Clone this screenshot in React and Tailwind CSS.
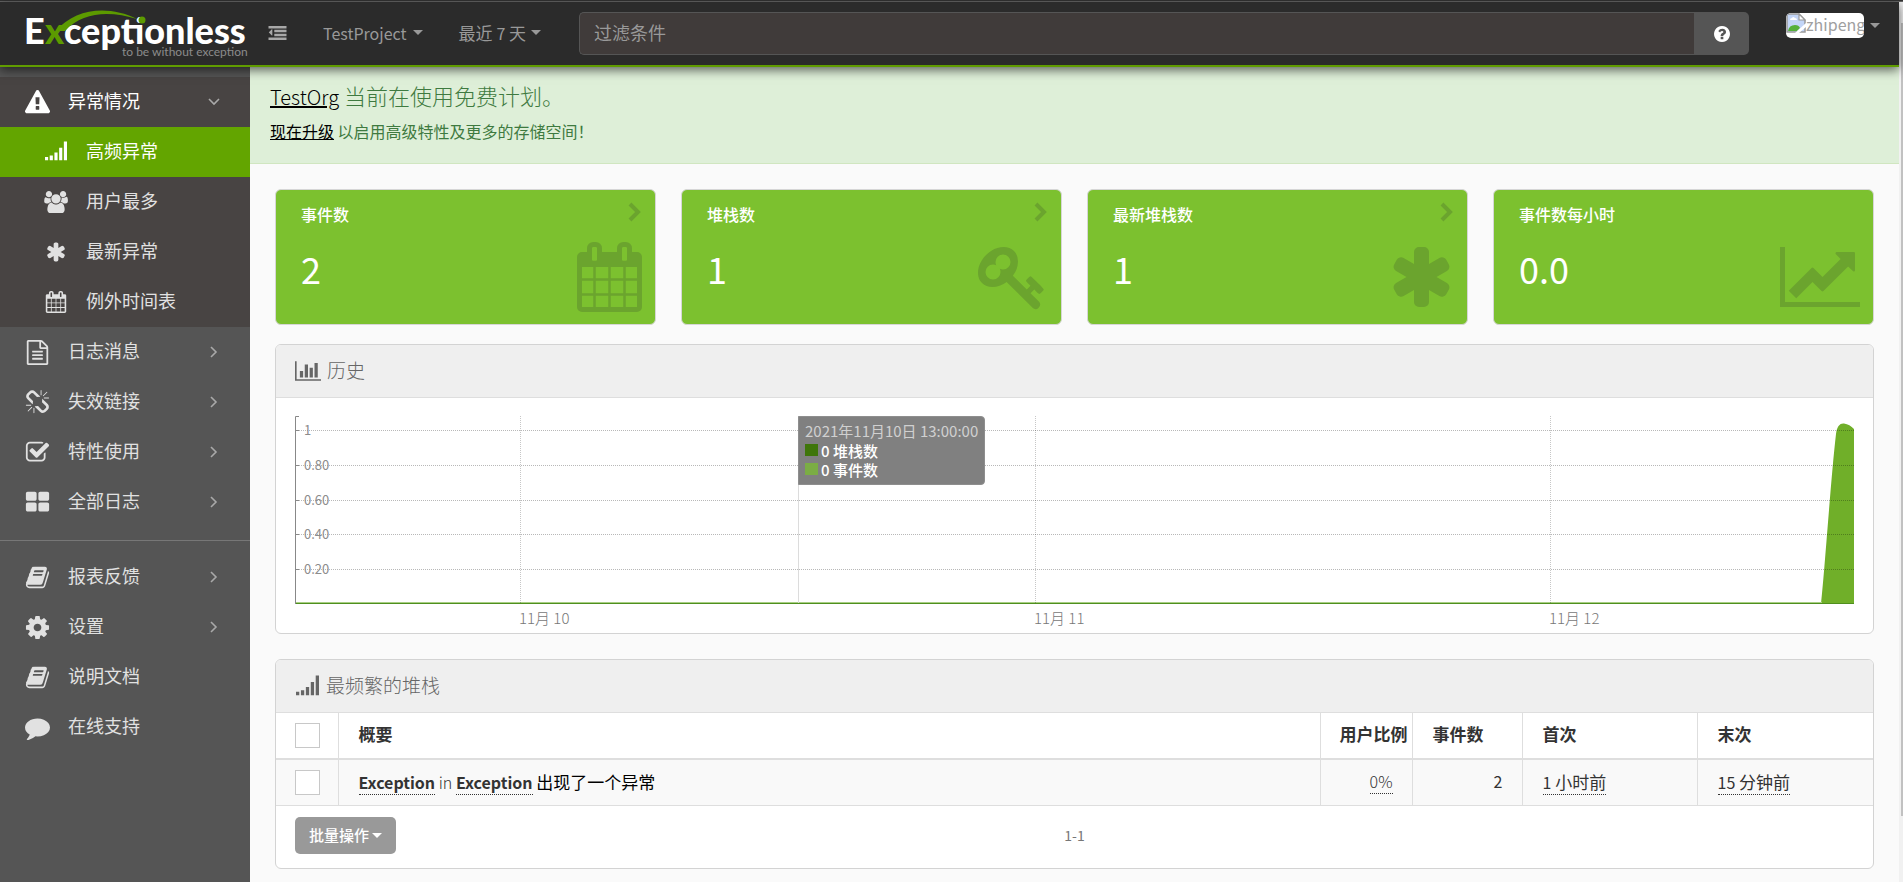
const ICONS = {
  dedent: {
    box: "0 0 1792 1792",
    d: "M384 544v576q0 13-9.5 22.5t-22.5 9.5q-14 0-23-9l-288-288q-9-9-9-23t9-23l288-288q9-9 23-9 13 0 22.5 9.5t9.5 22.5zM0 192h1792v256h-1792zM576 576h1216v256h-1216zM576 960h1216v256h-1216zM0 1344h1792v256h-1792z",
  },
  question: {
    box: "128 128 1536 1536",
    d: "M1024 1376v-192q0-14-9-23t-23-9h-192q-14 0-23 9t-9 23v192q0 14 9 23t23 9h192q14 0 23-9t9-23zm256-672q0-88-55.5-163t-138.5-116-170-41q-243 0-371 213-15 24 8 42l132 100q7 6 19 6 16 0 25-12 53-68 86-92 34-24 86-24 48 0 85.5 26t37.5 59q0 38-20 61t-68 45q-63 28-115.5 86.5t-52.5 125.5v36q0 14 9 23t23 9h192q14 0 23-9t9-23q0-19 21.5-49.5t54.5-49.5q32-18 49-28.5t46-35 44.5-48 28-60.5 12.5-81zm384 192q0 209-103 385.5t-279.5 279.5-385.5 103-385.5-103-279.5-279.5-103-385.5 103-385.5 279.5-279.5 385.5-103 385.5 103 279.5 279.5 103 385.5z",
  },
  warning: {
    box: "0 0 1792 1792",
    d: "M1024 1375v-190q0-14-9.5-23.5t-22.5-9.5h-192q-13 0-22.5 9.5t-9.5 23.5v190q0 14 9.5 23.5t22.5 9.5h192q13 0 22.5-9.5t9.5-23.5zm-2-374l18-459q0-12-10-19-13-11-24-11h-220q-11 0-24 11-10 7-10 21l17 457q0 10 10 16.5t24 6.5h185q14 0 23.5-6.5t10.5-16.5zm-14-934l768 1408q35 63-2 126-17 29-46.5 46t-63.5 17h-1536q-34 0-63.5-17t-46.5-46q-37-63-2-126l768-1408q17-31 47-49t65-18 65 18 47 49z",
  },
  signal: {
    box: "0 0 1792 1792",
    d: "M0 1312h256v256h-256zM384 1184h256v384h-256zM768 928h256v640h-256zM1152 544h256v1024h-256zM1536 32h256v1536h-256z",
  },
  users: {
    box: "0 0 1920 1792",
    d: "M593 896q-162 5-265 128h-134q-82 0-138-40.5t-56-118.5q0-353 124-353 6 0 43.5 21t97.5 42.5 119 21.5q67 0 133-23-5 37-5 66 0 159 93 293zm1071 637q0 120-73 189.5t-194 69.5h-874q-121 0-194-69.5t-73-189.5q0-53 3.5-103.5t14-109 26.5-108.5 43-97.5 62-81 85.5-53.5 111.5-20q10 0 43 21.5t73 48 107 48 135 21.5 135-21.5 107-48 73-48 43-21.5q61 0 111.5 20t85.5 53.5 62 81 43 97.5 26.5 108.5 14 109 3.5 103.5zm-1024-1277q0 106-75 181t-181 75-181-75-75-181 75-181 181-75 181 75 75 181zm704 384q0 159-112.5 271.5t-271.5 112.5-271.5-112.5-112.5-271.5 112.5-271.5 271.5-112.5 271.5 112.5 112.5 271.5zm576 225q0 78-56 118.5t-138 40.5h-134q-103-123-265-128 93-134 93-293 0-29-5-66 66 23 133 23 59 0 119-21.5t97.5-42.5 43.5-21q124 0 124 353zm-128-609q0 106-75 181t-181 75-181-75-75-181 75-181 181-75 181 75 75 181z",
  },
  asterisk: {
    box: "64 0 1664 1792",
    d: "M1546 1050q46 26 59.5 77.5t-12.5 97.5l-64 110q-26 46-77.5 59.5t-97.5-12.5l-266-153v307q0 52-38 90t-90 38h-128q-52 0-90-38t-38-90v-307l-266 153q-46 26-97.5 12.5t-77.5-59.5l-64-110q-26-46-12.5-97.5t59.5-77.5l266-154-266-154q-46-26-59.5-77.5t12.5-97.5l64-110q26-46 77.5-59.5t97.5 12.5l266 153v-307q0-52 38-90t90-38h128q52 0 90 38t38 90v307l266-153q46-26 97.5-12.5t77.5 59.5l64 110q26 46 12.5 97.5t-59.5 77.5l-266 154z",
  },
  calendar: {
    box: "64 0 1664 1792",
    d: "M192 1664h288v-288h-288v288zm352 0h320v-288h-320v288zm-352-352h288v-320h-288v320zm352 0h320v-320h-320v320zm-352-384h288v-288h-288v288zm736 736h320v-288h-320v288zm-384-736h320v-288h-320v288zm768 736h288v-288h-288v288zm-384-352h320v-320h-320v320zm-352-864v-288q0-13-9.5-22.5t-22.5-9.5h-64q-13 0-22.5 9.5t-9.5 22.5v288q0 13 9.5 22.5t22.5 9.5h64q13 0 22.5-9.5t9.5-22.5zm736 864h288v-320h-288v320zm-384-384h320v-288h-320v288zm384 0h288v-288h-288v288zm32-480v-288q0-13-9.5-22.5t-22.5-9.5h-64q-13 0-22.5 9.5t-9.5 22.5v288q0 13 9.5 22.5t22.5 9.5h64q13 0 22.5-9.5t9.5-22.5zm384-64v1280q0 52-38 90t-90 38h-1408q-52 0-90-38t-38-90v-1280q0-52 38-90t90-38h128v-96q0-66 47-113t113-47h64q66 0 113 47t47 113v96h384v-96q0-66 47-113t113-47h64q66 0 113 47t47 113v96h128q52 0 90 38t38 90z",
  },
  file: {
    box: "0 0 1792 1792",
    d: "M1596 380q28 28 48 76t20 88v1152q0 40-28 68t-68 28h-1344q-40 0-68-28t-28-68v-1600q0-40 28-68t68-28h896q40 0 88 20t76 48zm-444-244v376h376q-10-29-22-41l-313-313q-12-12-41-22zm384 1528v-1024h-416q-40 0-68-28t-28-68v-416h-768v1536h1280zm-1024-864q0-14 9-23t23-9h704q14 0 23 9t9 23v64q0 14-9 23t-23 9h-704q-14 0-23-9t-9-23v-64zm736 224q14 0 23 9t9 23v64q0 14-9 23t-23 9h-704q-14 0-23-9t-9-23v-64q0-14 9-23t23-9h704zm0 256q14 0 23 9t9 23v64q0 14-9 23t-23 9h-704q-14 0-23-9t-9-23v-64q0-14 9-23t23-9h704z",
  },
  unlink: {
    box: "0 0 1792 1792",
    d: "M503 1271l-256 256q-10 9-23 9-12 0-23-9-9-10-9-23t9-23l256-256q10-9 23-9t23 9q9 10 9 23t-9 23zm169 41v320q0 14-9 23t-23 9-23-9-9-23v-320q0-14 9-23t23-9 23 9 9 23zm-224-224q0 14-9 23t-23 9h-320q-14 0-23-9t-9-23 9-23 23-9h320q14 0 23 9t9 23zm1264 128q0 120-85 203l-147 146q-83 83-203 83-121 0-204-85l-334-335q-21-21-42-56l239-18 273 274q28 28 68 27.5t68-27.5l147-146q28-28 28-67 0-40-28-68l-274-275 18-239q35 21 56 42l336 336q84 86 84 204zm-617-724l-239 18-273-274q-28-28-68-28-39 0-68 27l-147 146q-28 28-28 67 0 40 28 68l274 274-18 240q-35-21-56-42l-336-336q-84-86-84-204 0-120 85-203l147-146q83-83 203-83 121 0 204 85l334 335q21 21 42 56zm633 84q0 14-9 23t-23 9h-320q-14 0-23-9t-9-23 9-23 23-9h320q14 0 23 9t9 23zm-544-544v320q0 14-9 23t-23 9-23-9-9-23v-320q0-14 9-23t23-9 23 9 9 23zm407 151l-256 256q-11 9-23 9t-23-9q-9-10-9-23t9-23l256-256q10-9 23-9t23 9q9 10 9 23t-9 23z",
  },
  check: {
    box: "64 0 1664 1792",
    d: "M1472 930v318q0 119-84.5 203.5t-203.5 84.5h-832q-119 0-203.5-84.5t-84.5-203.5v-832q0-119 84.5-203.5t203.5-84.5h832q63 0 117 25 15 7 18 23 3 17-9 29l-49 49q-10 10-23 10-3 0-9-2-23-6-45-6h-832q-66 0-113 47t-47 113v832q0 66 47 113t113 47h832q66 0 113-47t47-113v-254q0-13 9-22l64-64q10-10 23-10 6 0 12 3 20 8 20 29zm231-489l-814 814q-24 24-57 24t-57-24l-430-430q-24-24-24-57t24-57l110-110q24-24 57-24t57 24l263 263 647-647q24-24 57-24t57 24l110 110q24 24 24 57t-24 57z",
  },
  large: {
    box: "64 0 1664 1792",
    d: "M832 1024v384q0 52-38 90t-90 38h-512q-52 0-90-38t-38-90v-384q0-52 38-90t90-38h512q52 0 90 38t38 90zm0-768v384q0 52-38 90t-90 38h-512q-52 0-90-38t-38-90v-384q0-52 38-90t90-38h512q52 0 90 38t38 90zm896 768v384q0 52-38 90t-90 38h-512q-52 0-90-38t-38-90v-384q0-52 38-90t90-38h512q52 0 90 38t38 90zm0-768v384q0 52-38 90t-90 38h-512q-52 0-90-38t-38-90v-384q0-52 38-90t90-38h512q52 0 90 38t38 90z",
  },
  book: {
    box: "64 0 1664 1792",
    d: "M1703 478q40 57 18 129l-275 906q-19 64-76.5 107.5t-122.5 43.5h-923q-77 0-148.5-53.5t-99.5-131.5q-24-67-2-127 0-4 3-27t4-37q1-8-3-21.5t-3-19.5q2-11 8-21t16.5-23.5 16.5-23.5q23-38 45-91.5t30-91.5q3-10 .5-30t-.5-28q3-11 17-28t17-23q21-36 42-92t25-90q1-9-2.5-32t.5-28q4-13 22-30.5t22-22.5q19-26 42.5-84.5t27.5-96.5q1-8-3-25.5t-2-26.5q2-8 9-18t18-23 17-21q8-12 16.5-30.5t15-35 16-36 19.5-32 26.5-23.5 36-11.5 47.5 5.5l-1 3q38-9 51-9h761q74 0 114 56t18 130l-274 906q-36 119-71.5 153.5t-128.5 34.5h-869q-27 0-38 15-11 16-1 43 24 70 144 70h923q29 0 56-15.5t35-41.5l300-987q7-22 5-57 38 15 59 43zm-1064 2q-4 13 2 22.5t20 9.5h608q13 0 25.5-9.5t16.5-22.5l21-64q4-13-2-22.5t-20-9.5h-608q-13 0-25.5 9.5t-16.5 22.5zm-83 256q-4 13 2 22.5t20 9.5h608q13 0 25.5-9.5t16.5-22.5l21-64q4-13-2-22.5t-20-9.5h-608q-13 0-25.5 9.5t-16.5 22.5z",
  },
  cog: {
    box: "64 64 1664 1664",
    d: "M1152 896q0-106-75-181t-181-75-181 75-75 181 75 181 181 75 181-75 75-181zm512-109v222q0 12-8 23t-20 13l-185 28q-19 54-39 91 35 50 107 138 10 12 10 25t-9 23q-27 37-99 108t-94 71q-12 0-26-9l-138-108q-44 23-91 38-16 136-29 186-7 28-36 28h-222q-14 0-24.5-8.5t-11.5-21.5l-28-184q-49-16-90-37l-141 107q-10 9-25 9-14 0-25-11-126-114-165-168-7-10-7-23 0-12 8-23 15-21 51-66.5t54-70.5q-27-50-41-99l-183-27q-13-2-21-12.5t-8-23.5v-222q0-12 8-23t19-13l186-28q14-46 39-92-40-57-107-138-10-12-10-24 0-10 9-23 26-36 98.5-107.5t94.5-71.5q13 0 26 10l138 107q44-23 91-38 16-136 29-186 7-28 36-28h222q14 0 24.5 8.5t11.5 21.5l28 184q49 16 90 37l142-107q9-9 24-9 13 0 25 10 129 119 165 170 7 8 7 22 0 12-8 23-15 21-51 66.5t-54 70.5q26 50 41 98l183 28q13 2 21 12.5t8 23.5z",
  },
  comment: {
    box: "0 0 1792 1792",
    d: "M1792 896q0 174-120 321.5t-326 233-450 85.5q-70 0-145-8-198 175-460 242-49 14-114 22-17 2-30.5-9t-17.5-29v-1q-3-4-.5-12t2-10 4.5-9.5l6-9 7-8.5 8-9q7-8 31-34.5t34.5-38 31-39.5 32.5-51 27-59 26-76q-157-89-247.5-220t-90.5-281q0-130 71-248.5t191-204.5 286-136.5 348-50.5q244 0 450 85.5t326 233 120 321.5z",
  },
  bars: {
    box: "0 0 2048 1792",
    d: "M640 896v512h-256v-512h256zm384-512v1024h-256v-1024h256zm1024 1152v128h-2048v-1536h128v1408h1920zm-640-896v768h-256v-768h256zm384-384v1152h-256v-1152h256z",
  },
  line: {
    box: "0 0 2048 1792",
    d: "M2048 1536v128h-2048v-1536h128v1408h1920zm-128-1248v435q0 21-19.5 29.5t-35.5-7.5l-121-121-633 633q-10 10-23 10t-23-10l-233-233-416 416-192-192 585-585q10-10 23-10t23 10l233 233 464-464-121-121q-16-16-7.5-35.5t29.5-19.5h435q14 0 23 9t9 23z",
  },
  key: {
    box: "0 0 1792 1792",
    d: "M832 512q0-80-56-136t-136-56-136 56-56 136q0 42 19 83-41-19-83-19-80 0-136 56t-56 136 56 136 136 56 136-56 56-136q0-42-19-83 41 19 83 19 80 0 136-56t56-136zm851 704q0 17-49 66t-66 49q-9 0-28.5-16t-36.5-33-38.5-40-24.5-26l-96 96 220 220q28 28 28 68 0 42-39 81t-81 39q-40 0-68-28l-671-671q-176 131-365 131-163 0-265.5-102.5t-102.5-265.5q0-160 95-313t248-248 313-95q163 0 265.5 102.5t102.5 265.5q0 189-131 365l355 355 96-96q-3-3-26-24.5t-40-38.5-33-36.5-16-28.5q0-17 49-66t66-49q13 0 23 10 6 6 46 44.5t82 79.5 86.5 86 73 78 28.5 41z",
  },
};

function Icon({ name, className }) {
  return (
    <svg viewBox={ICONS[name].box} className={className} fill="currentColor" aria-hidden="true">
      <path d={ICONS[name].d} />
    </svg>
  );
}

function Caret() {
  return (
    <svg viewBox="0 0 10 5" className="w-[10px] h-[5px]" fill="currentColor" aria-hidden="true">
      <path d="M0 0h10L5 5z" />
    </svg>
  );
}

function Angle({ open }) {
  return (
    <svg
      viewBox="0 0 12 12"
      className={`w-3 h-3 text-[#a9a9a9] ${open ? "rotate-90" : ""}`}
      fill="none"
      stroke="currentColor"
      strokeWidth="1.6"
      aria-hidden="true"
    >
      <path d="M3 1l5 5-5 5" />
    </svg>
  );
}

function Logo() {
  return (
    <a href="#home" className="shrink-0">
      <svg viewBox="0 0 230 52" className="w-[230px] h-[52px] block" role="img" aria-label="Exceptionless">
        <g fontFamily="Lato, sans-serif" fontWeight="900" fontSize="36" fill="#fff">
          <text x="-1" y="37">E</text>
          <text x="20" y="37" fill="#5c9a00">x</text>
          <text x="39" y="37">ceptionless</text>
        </g>
        <path d="M31 24C50 1 84 -2 112 12C86 4 58 4 40 24z" fill="#5c9a00" />
        <circle cx="117" cy="13" r="3.5" fill="#5c9a00" />
        <text x="97" y="49" fontFamily="Lato, sans-serif" fontSize="12" fill="#8c8c8c">to be without exception</text>
      </svg>
    </a>
  );
}

function Header() {
  return (
    <header className="h-[65px] flex items-start bg-[#2b2b2b] border-b-2 border-[#609c00] shadow-[0_3px_10px_rgba(0,0,0,0.6)] text-[#999] relative z-10">
      <div className="flex items-center h-[61px] pl-[25px] shrink-0">
        <Logo />
        <button type="button" aria-label="折叠菜单" className="ml-[13px] text-[#a8a8a8]">
          <Icon name="dedent" className="w-[19px] h-[18px]" />
        </button>
        <button type="button" className="ml-9 flex items-center gap-[6px] text-base">
          TestProject <Caret />
        </button>
        <button type="button" className="ml-9 flex items-center gap-[5px] text-[17px]">
          <span>最近 <span className="text-base">7</span> 天</span> <Caret />
        </button>
      </div>
      <form className="flex flex-1 h-[43px] mt-[10px] ml-[38px]" onSubmit={(e) => e.preventDefault()}>
        <input
          type="text"
          aria-label="过滤条件"
          placeholder="过滤条件"
          className="flex-1 min-w-0 bg-[#403b3a] border border-r-0 border-[#555] rounded-l-[5px] px-[14px] pb-[2px] text-[18px] text-[#ccc] placeholder:text-[#999] outline-none"
        />
        <button type="button" aria-label="帮助" className="w-[55px] bg-[#555] rounded-r-[5px] flex items-center justify-center text-white">
          <Icon name="question" className="w-4 h-4" />
        </button>
      </form>
      <button type="button" className="ml-[37px] mr-[19px] mt-[11px] flex items-center gap-[6px]">
        <span className="flex w-[78px] h-[25px] bg-white rounded-[5px] overflow-hidden text-base leading-[23px] text-[#a0a0a0]">
          <svg viewBox="0 0 20 20" className="w-5 h-5 shrink-0" aria-hidden="true">
            <path d="M1 1h12l6 6v12H1z" fill="#c3d5f7" stroke="#9a9a9a" strokeWidth="1.5" />
            <path d="M13 1v6h6z" fill="#fff" stroke="#9a9a9a" strokeWidth="1.2" />
            <path d="M4 7q0-2 2-2 1-2 3 0 2 0 2 2z" fill="#fff" />
            <path d="M2 18q1-6 7-6 4 0 5 3l-3 3z" fill="#56b03a" />
            <path d="M9 20L20 10v4l-7 6z" fill="#fff" />
          </svg>
          zhipeng
        </span>
        <Caret />
      </button>
    </header>
  );
}

const exceptionItems = [
  { name: "高频异常", icon: "signal", active: true },
  { name: "用户最多", icon: "users" },
  { name: "最新异常", icon: "asterisk" },
  { name: "例外时间表", icon: "calendar" },
];

const mainItems = [
  { name: "日志消息", icon: "file" },
  { name: "失效链接", icon: "unlink" },
  { name: "特性使用", icon: "check" },
  { name: "全部日志", icon: "large" },
];

const footerItems = [
  { name: "报表反馈", icon: "book", more: true },
  { name: "设置", icon: "cog", more: true },
  { name: "说明文档", icon: "book" },
  { name: "在线支持", icon: "comment" },
];

function NavItem({ name, icon, more, open }) {
  return (
    <a href="#nav" className={`h-[50px] flex items-center pl-[25px] pr-[30px] ${open ? "text-white" : ""}`}>
      <Icon name={icon} className="w-[25px] h-[25px]" />
      <span className="ml-[18px] pb-[3px] flex-1">{name}</span>
      {more && <Angle open={open} />}
    </a>
  );
}

function Sidebar() {
  return (
    <nav className="w-[250px] shrink-0 bg-[#555] text-[#e1e1e1] text-[18px] pt-[10px]">
      <div className="bg-[#484443]">
        <NavItem name="异常情况" icon="warning" more open />
        {exceptionItems.map((item) => (
          <a
            key={item.name}
            href="#nav"
            className={`h-[50px] flex items-center pl-11 ${item.active ? "bg-[#63a500] text-white" : ""}`}
          >
            <Icon name={item.icon} className="w-6 h-[22px]" />
            <span className="ml-[18px] pb-[3px]">{item.name}</span>
          </a>
        ))}
      </div>
      {mainItems.map((item) => (
        <NavItem key={item.name} {...item} more />
      ))}
      <hr className="mt-[13px] mb-[11px] border-[#777]" />
      {footerItems.map((item) => (
        <NavItem key={item.name} {...item} />
      ))}
    </nav>
  );
}

const stats = [
  { label: "事件数", value: "2", icon: "calendar", size: "w-[65px] h-[70px]", link: true },
  { label: "堆栈数", value: "1", icon: "key", size: "w-[70px] h-[70px]", link: true },
  { label: "最新堆栈数", value: "1", icon: "asterisk", size: "w-[65px] h-[70px]", link: true },
  { label: "事件数每小时", value: "0.0", icon: "line", size: "w-[80px] h-[70px]" },
];

function StatCard({ label, value, icon, size, link }) {
  return (
    <a href="#stat" className="h-[136px] flex justify-between bg-[#7cc12f] border border-[#d6d6d6] rounded-[6px] text-white pl-[25px] pr-[13px] py-3">
      <div>
        <div className="text-base leading-6 font-medium">{label}</div>
        <div className="text-[36px] leading-[48px] mt-[18px]">{value}</div>
      </div>
      <div className="flex flex-col items-end justify-between text-[#6ba42e]">
        {link ? (
          <svg viewBox="0 0 14 20" className="w-[14px] h-5" fill="none" stroke="currentColor" strokeWidth="4" aria-hidden="true">
            <path d="M2 2l8 8-8 8" />
          </svg>
        ) : (
          <span />
        )}
        <Icon name={icon} className={size} />
      </div>
    </a>
  );
}

function Panel({ icon, title, iconClass, children }) {
  return (
    <section className="bg-white border border-[#d3d3d3] rounded-[6px] overflow-hidden">
      <h2 className="h-[53px] flex items-center gap-[6px] px-[19px] bg-[#efefef] border-b border-[#dedede] text-[19px] font-light text-[#666]">
        <Icon name={icon} className={iconClass} />
        <span className="pb-[2px]">{title}</span>
      </h2>
      {children}
    </section>
  );
}

const yTicks = [
  { label: "1", y: 14 },
  { label: "0.80", y: 49 },
  { label: "0.60", y: 84 },
  { label: "0.40", y: 118 },
  { label: "0.20", y: 153 },
];

const days = [
  { label: "11月 10", x: 225 },
  { label: "11月 11", x: 740 },
  { label: "11月 12", x: 1255 },
];

const CHART_WIDTH = 1559;
const pct = (x) => `${(x / CHART_WIDTH) * 100}%`;

function HistoryChart() {
  return (
    <div className="px-[19px] pt-[18px] pb-[29px]">
      <div className="relative h-[188px]">
        <svg viewBox="0 0 1559 188" preserveAspectRatio="none" className="w-full h-full block" aria-hidden="true">
          <path d="M1526 188C1530 151 1536 60 1541 18C1542 10 1545 7 1549 7.5C1553 8 1556 10 1559 13V188z" fill="#70af29" />
          <path d="M0 186.5H1527" stroke="#a9cf85" />
          <g stroke="#000" strokeOpacity="0.28" strokeDasharray="1 1">
            {yTicks.map((t) => (
              <path key={t.label} d={`M0 ${t.y}.5H1559`} />
            ))}
          </g>
          <g stroke="#000" strokeOpacity="0.22" strokeDasharray="1 1">
            {days.map((d) => (
              <path key={d.label} d={`M${d.x}.5 0V188`} />
            ))}
          </g>
          <path d="M0 187.5H1559" stroke="#4f8f1e" />
          <path d="M503.5 0V187" stroke="#dcdcdc" />
          <path d="M4 .5H.5V188M0 14.5H4M0 49.5H4M0 84.5H4M0 118.5H4M0 153.5H4" stroke="#888" fill="none" />
        </svg>
        {yTicks.map((t) => (
          <span
            key={t.label}
            className="absolute left-[9px] -translate-y-1/2 leading-4 text-[13px] text-[#8c8c8c]"
            style={{ top: t.y }}
          >
            {t.label}
          </span>
        ))}
        {days.map((d) => (
          <span
            key={d.label}
            className="absolute top-full mt-[4px] leading-5 text-[15px] font-light text-[#777]"
            style={{ left: pct(d.x - 1) }}
          >
            {d.label}
          </span>
        ))}
        <div
          className="absolute top-0 bg-[#808080] border border-[#8e8e8e] rounded-r-[4px] px-[6px] pt-1 pb-[5px] text-[15px] text-white"
          style={{ left: pct(503) }}
        >
          <div className="leading-5 text-[#d0d0d0] whitespace-nowrap">2021年11月10日 13:00:00</div>
          <div className="flex gap-[3px] leading-[19px] font-medium"><i className="w-[13px] h-3 mt-[3px] bg-[#3f760a]" />0 堆栈数</div>
          <div className="flex gap-[3px] leading-[19px] font-medium"><i className="w-[13px] h-3 mt-[3px] bg-[#7bad44]" />0 事件数</div>
        </div>
      </div>
    </div>
  );
}

function Checkbox({ label }) {
  return (
    <input
      type="checkbox"
      aria-label={label}
      className="block appearance-none w-[25px] h-[25px] bg-white border border-[#c8c8c8] checked:bg-[#63a500]"
    />
  );
}

const dotted = "border-b border-dotted border-[#333]";

function StackTable() {
  return (
    <table className="w-full table-fixed border-collapse text-[#333] text-[17px]">
      <colgroup>
        <col className="w-[62px]" />
        <col />
        <col className="w-[92px]" />
        <col className="w-[110px]" />
        <col className="w-[175px]" />
        <col className="w-[176px]" />
      </colgroup>
      <thead>
        <tr className="h-[46px] border-b-2 border-[#dedede] text-left [&>th]:border-r [&>th]:border-[#dedede] [&>th:last-child]:border-r-0">
          <th className="pl-[19px]"><Checkbox label="全选" /></th>
          <th className="pl-5 pb-[3px]">概要</th>
          <th className="pl-[19px] pb-[3px] whitespace-nowrap">用户比例</th>
          <th className="pl-5 pb-[3px]">事件数</th>
          <th className="pl-5 pb-[3px]">首次</th>
          <th className="pl-5 pb-[3px]">末次</th>
        </tr>
      </thead>
      <tbody>
        <tr className="h-[46px] bg-[#f9f9f9] border-b border-[#dedede] [&>td]:border-r [&>td]:border-[#dedede] [&>td:last-child]:border-r-0">
          <td className="pl-[19px]"><Checkbox label="选择" /></td>
          <td className="pl-5 pb-[2px]">
            <a href="#stack" className="text-black">
              <span className="text-base leading-6 text-[#333]">
                <b className={dotted}>Exception</b> <span className="font-light">in</span> <b className={dotted}>Exception</b>
              </span>{" "}
              出现了一个异常
            </a>
          </td>
          <td className="pr-[19px] pb-[2px] text-right text-base font-light"><span className={dotted}>0%</span></td>
          <td className="pr-[19px] pb-[2px] text-right text-base">2</td>
          <td className="pl-5 pb-[2px]"><span className={dotted}><span className="text-base">1</span> 小时前</span></td>
          <td className="pl-5 pb-[2px]"><span className={dotted}><span className="text-base">15</span> 分钟前</span></td>
        </tr>
      </tbody>
    </table>
  );
}

function Dashboard() {
  return (
    <main className="flex-1 min-w-0 bg-[#fafafa]">
      <div className="h-[97px] bg-[#deefd8] border-b border-[#d0e6c0] pt-[13px] pl-5 text-[#3e7a40]">
        <h4 className="text-[22px] leading-[30px] font-light">
          <a href="#org" className="text-[20px] text-black underline">TestOrg</a> 当前在使用免费计划。
        </h4>
        <p className="text-base leading-6 mt-[7px]">
          <a href="#upgrade" className="text-black underline">现在升级</a> 以启用高级特性及更多的存储空间！
        </p>
      </div>
      <div className="px-[25px] pt-[25px] pb-[14px]">
        <div className="grid grid-cols-4 gap-[25px] mb-[19px]">
          {stats.map((s) => (
            <StatCard key={s.label} {...s} />
          ))}
        </div>
        <div className="flex flex-col gap-[25px]">
          <Panel icon="bars" title="历史" iconClass="w-[26px] h-6">
            <HistoryChart />
          </Panel>
          <Panel icon="signal" title="最频繁的堆栈" iconClass="w-[25px] h-[23px]">
            <StackTable />
            <div className="h-[62px] flex items-center px-[19px] pb-[2px] text-sm text-[#777]">
              <div className="flex-1">
                <button type="button" className="h-[37px] px-[14px] flex items-center gap-[3px] bg-[#999] rounded-[5px] text-[15px] font-medium text-white">
                  <span className="pb-[2px]">批量操作</span> <Caret />
                </button>
              </div>
              <span className="pb-[2px]">1-1</span>
              <div className="flex-1" />
            </div>
          </Panel>
        </div>
      </div>
    </main>
  );
}

export default function App() {
  return (
    <div className="min-h-screen flex flex-col bg-[#fafafa] font-['Noto_Sans_CJK_SC',sans-serif]">
      <div className="h-[2px] bg-[#333] border-b border-[#666]" />
      <div className="flex flex-1">
        <div className="flex-1 min-w-0 flex flex-col">
          <Header />
          <div className="flex flex-1">
            <Sidebar />
            <Dashboard />
          </div>
        </div>
        <div className="w-1 bg-[#f1f1f1] pl-[2px] pt-[21px] pb-[67px] flex">
          <div className="flex-1 bg-[#c1c1c1]" />
        </div>
      </div>
    </div>
  );
}
